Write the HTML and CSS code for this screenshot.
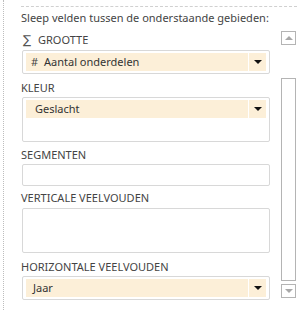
FILE: index.html
```html
<!DOCTYPE html>
<html>
<head>
<meta charset="utf-8">
<link rel="stylesheet" href="styles.css">
</head>
<body>
<div class="frame">
  <div class="panel">
    <div class="rule"></div>
    <div class="main">
      <div class="fields">
        <div class="intro">Sleep velden tussen de onderstaande gebieden:</div>
        <div class="section s-size">
          <div class="label"><span class="sigma">∑</span>GROOTTE</div>
          <div class="box">
            <div class="pill"><span class="pill-text"><span class="hash">#</span>Aantal onderdelen</span><span class="drop"><span class="tri"></span></span></div>
          </div>
        </div>
        <div class="section s-color">
          <div class="label">KLEUR</div>
          <div class="box tall">
            <div class="pill"><span class="pill-text indent">Geslacht</span><span class="drop"><span class="tri"></span></span></div>
          </div>
        </div>
        <div class="section s-seg">
          <div class="label">SEGMENTEN</div>
          <div class="box empty"></div>
        </div>
        <div class="section s-vert">
          <div class="label">VERTICALE VEELVOUDEN</div>
          <div class="box tall"></div>
        </div>
        <div class="section s-hor">
          <div class="label">HORIZONTALE VEELVOUDEN</div>
          <div class="box">
            <div class="pill"><span class="pill-text jaar">Jaar</span><span class="drop"><span class="tri"></span></span></div>
          </div>
        </div>
      </div>
      <div class="scrollbar">
        <div class="sbtn up"><span class="gtri up-tri"></span></div>
        <div class="thumb"></div>
        <div class="sbtn down"><span class="gtri down-tri"></span></div>
      </div>
    </div>
  </div>
</div>
</body>
</html>
```

FILE: styles.css
```css
* { box-sizing: border-box; }
html, body { margin: 0; padding: 0; background: #fff; }
body {
  width: 306px;
  height: 310px;
  overflow: hidden;
  font-family: "Noto Sans", "Open Sans", sans-serif;
  font-size: 11px;
  color: #444;
}
.frame {
  margin-left: 3px;
  height: 310px;
  border-left: 1px dotted #bdbdbd;
  padding-left: 17px;
}
.panel {
  display: flex;
  flex-direction: column;
  width: 276px;
}
.rule {
  margin-top: 6px;
  border-top: 1px dashed #d0d0d0;
  height: 0;
}
.main {
  display: flex;
}
.fields {
  width: 249px;
  display: flex;
  flex-direction: column;
}
.intro {
  margin-top: 3px;
  height: 16px;
  line-height: 16px;
  white-space: nowrap;
}
.label {
  height: 16px;
  line-height: 16px;
  white-space: nowrap;
  margin-bottom: 1px;
}
.sigma {
  display: inline-block;
  width: 17px;
  padding-left: 2px;
  font-family: "DejaVu Sans", sans-serif;
  font-size: 12px;
  color: #555;
}
.s-size { margin-top: 6px; }
.s-size .label { margin-bottom: 2px; }
.s-color { margin-top: 6px; }
.s-seg { margin-top: 5px; }
.s-vert { margin-top: 4px; }
.s-vert .label { margin-bottom: 2px; }
.s-hor { margin-top: 6px; }
.box {
  margin-left: 1px;
  width: 248px;
  border: 1px solid #d8d8d8;
  border-radius: 2px;
  padding: 2px 3px;
  height: 24px;
}
.box.tall { height: 45px; }
.box.empty { height: 22px; }
.pill {
  height: 18px;
  background: #fcefd8;
  display: flex;
  align-items: stretch;
}
.pill-text {
  flex: 1;
  line-height: 18px;
  padding-left: 5px;
  color: #333;
  white-space: nowrap;
}
.pill-text.indent { padding-left: 9px; }
.pill-text.jaar { padding-left: 7px; }
.hash {
  display: inline-block;
  width: 13px;
  color: #444;
}
.drop {
  width: 18px;
  border-left: 1px solid #fff;
  display: flex;
  align-items: center;
  justify-content: center;
}
.tri {
  width: 0;
  height: 0;
  border-left: 4px solid transparent;
  border-right: 4px solid transparent;
  border-top: 4px solid #111;
}
.scrollbar {
  margin-left: 11px;
  width: 15px;
  display: flex;
  flex-direction: column;
}
.sbtn {
  width: 15px;
  height: 14px;
  border: 1px solid #b4b4b4;
  display: flex;
  align-items: center;
  justify-content: center;
}
.up { margin-top: 24px; }
.thumb {
  margin-top: 33px;
  height: 203px;
  border: 1px solid #b4b4b4;
}
.down { margin-top: 3px; }
.gtri {
  width: 0;
  height: 0;
  border-left: 4px solid transparent;
  border-right: 4px solid transparent;
}
.up-tri { border-bottom: 4px solid #a8a8a8; }
.down-tri { border-top: 4px solid #a8a8a8; }
```
